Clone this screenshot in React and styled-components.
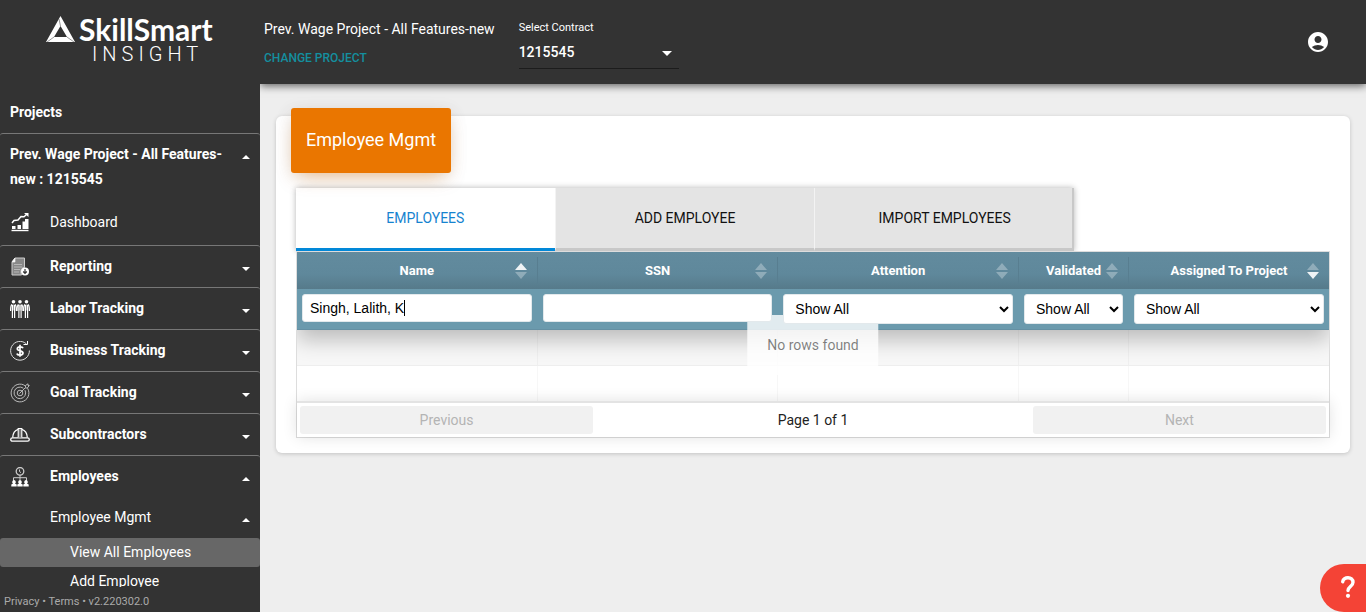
import React from "react";
import styled, { createGlobalStyle, css } from "styled-components";
import { MdAccountCircle } from "react-icons/md";

const GlobalStyle = createGlobalStyle`
  *, *::before, *::after { box-sizing: border-box; }
  body {
    margin: 0;
    background: #eee;
    font-family: Roboto, "Liberation Sans", sans-serif;
    font-size: 14px;
    color: #222;
  }
  button, a { font-family: inherit; }
`;

const Page = styled.div`
  display: grid;
  grid-template-columns: 260px minmax(0, 1fr);
  min-height: 100vh;
`;

const Sidebar = styled.aside`
  display: flex;
  flex-direction: column;
  height: 100vh;
  background: #333;
  color: #fff;
  z-index: 3;
`;

const Logo = styled.a`
  display: flex;
  flex-direction: column;
  height: 92px;
  flex: none;
  padding: 14px 0 0 46px;
  color: #fff;
  text-decoration: none;
`;

const LogoTop = styled.span`
  display: flex;
  align-items: center;
  gap: 4px;
  height: 30px;
  font: 700 30px/30px Lato, sans-serif;
`;

const LogoSub = styled.span`
  padding-left: 46px;
  font-size: 20px;
  font-weight: 300;
  line-height: 20px;
  letter-spacing: 5px;
`;

const Nav = styled.nav`
  flex: 1;
  min-height: 0;
  overflow: hidden;
`;

const rowStyle = css`
  display: flex;
  align-items: center;
  width: 100%;
  padding: 0 10px;
  border: 0;
  background: none;
  color: #fff;
  font-size: 14px;
  text-align: left;
  text-decoration: none;
`;

const Section = styled.div`
  border-top: ${(p) => (p.$first ? "0" : "1px solid #777")};
  border-radius: 3px;
`;

const Caret = styled.span`
  width: 0;
  height: 0;
  margin-top: 5px;
  border: 4px solid transparent;
  ${(p) =>
    p.$up
      ? "border-bottom-color: #fff; border-top-width: 0;"
      : "border-top-color: #fff; border-bottom-width: 0;"}
`;

const NavButton = styled.button`
  ${rowStyle}
  height: 41px;
  padding-left: ${(p) => (p.$nested ? "50px" : "10px")};
  gap: 20px;
  font-weight: ${(p) => (p.$nested ? 400 : 700)};
  line-height: 25px;
  ${(p) =>
    p.$tall &&
    css`
      align-items: flex-start;
      height: 66px;
      padding-top: 8px;
      ${Caret} { margin-top: 13px; }
    `}
`;

const NavLabel = styled.span`
  flex: 1;
`;

const NavLink = styled.a`
  ${rowStyle}
  height: 45px;
  padding-bottom: 2px;
  gap: 20px;
`;

const SubLink = styled.a`
  ${rowStyle}
  height: 29px;
  padding-left: 70px;
  padding-bottom: 2px;
  border-radius: 3px;
  background: ${(p) => (p.$active ? "#676767" : "transparent")};
`;

const Legal = styled.footer`
  height: 25px;
  flex: none;
  padding: 1px 4px 0;
  font-size: 11px;
  line-height: 28px;
  color: #aaa;
  a { color: inherit; text-decoration: none; }
`;

const TopBar = styled.header`
  position: relative;
  z-index: 2;
  display: flex;
  align-items: flex-start;
  gap: 24px;
  height: 84px;
  padding: 0 36px 0 4px;
  background: #333;
  color: #fff;
  box-shadow: 0 2px 8px rgba(0, 0, 0, 0.6);
`;

const Project = styled.div`
  display: flex;
  flex-direction: column;
  align-items: flex-start;
  gap: 10px;
  min-width: 230px;
  padding-top: 20px;
  font-size: 14px;
  line-height: 18px;
`;

const ChangeLink = styled.button`
  padding: 0;
  border: 0;
  background: none;
  color: #148f9f;
  font-size: 12px;
  font-weight: 500;
  line-height: 20px;
  text-transform: uppercase;
`;

const Contract = styled.label`
  position: relative;
  display: flex;
  flex-direction: column;
  width: 160px;
  padding-top: 20px;
  font-size: 11px;
  line-height: 15px;
  svg { position: absolute; right: 7px; bottom: 13px; pointer-events: none; }
`;

const ContractSelect = styled.select`
  appearance: none;
  width: 100%;
  height: 34px;
  padding: 0;
  border: 0;
  border-bottom: 1px solid #1c1c1c;
  background: #333;
  color: #fff;
  font: 500 14px Roboto, sans-serif;
`;

const Account = styled.button`
  align-self: center;
  display: flex;
  margin-left: auto;
  padding: 0;
  border: 0;
  background: none;
  color: #fff;
`;

const Content = styled.main`
  padding: 32px 16px;
`;

const Card = styled.section`
  padding: 0 20px 15px;
  border-radius: 6px;
  background: #fff;
  box-shadow: 0 1px 4px rgba(0, 0, 0, 0.18);
`;

const Title = styled.h1`
  position: relative;
  top: -8px;
  width: fit-content;
  margin: 0 0 7px -5px;
  padding: 19px 15px 21px;
  border-radius: 3px;
  background: #ea7600;
  box-shadow: 0 8px 20px -8px rgba(234, 118, 0, 0.5), 0 4px 18px rgba(0, 0, 0, 0.1);
  color: #fff;
  font-size: 18px;
  font-weight: 400;
  line-height: 25px;
`;

const Tabs = styled.div`
  display: flex;
  width: 778px;
  max-width: 100%;
  box-shadow: 0 0 6px rgba(0, 0, 0, 0.3);
`;

const Tab = styled.button`
  flex: 1;
  height: 63px;
  padding: 0;
  border: 0;
  border-left: ${(p) => (p.$active ? "0" : "1px solid #f3f3f3")};
  border-bottom: 3px solid ${(p) => (p.$active ? "#0288d8" : "#c8c8c8")};
  background: ${(p) => (p.$active ? "#fff" : "#e4e4e4")};
  box-shadow: ${(p) => (p.$last ? "inset -2px 0 #c8c8c8" : "none")};
  color: ${(p) => (p.$active ? "#1683cf" : "#111")};
  font-size: 14px;
  text-transform: uppercase;
`;

const Grid = styled.div`
  position: relative;
  border: 1px solid #ddd;
`;

const TableClip = styled.div`
  overflow: hidden;
`;

const Table = styled.table`
  width: 100%;
  table-layout: fixed;
  border-collapse: separate;
  border-spacing: 0;
  thead {
    position: relative;
    box-shadow: 0 10px 20px rgba(0, 0, 0, 0.24);
  }
`;

const Column = styled.col`
  width: ${(p) => p.$width};
`;

const HeadCell = styled.th`
  height: 37px;
  padding: 5px 0;
  background: linear-gradient(#628b9e, #5f889b 60%, #567a8a);
`;

const SortButton = styled.button`
  display: grid;
  grid-template-columns: 1fr auto 1fr;
  align-items: center;
  width: 100%;
  height: 27px;
  padding: 0 10px;
  border: 0;
  border-right: ${(p) => (p.$last ? "0" : "1px solid #587e90")};
  background: none;
  color: #fff;
  font-size: 13px;
  font-weight: 700;
  span { grid-column: 2; }
  svg { justify-self: end; }
`;

const FilterCell = styled.th`
  position: relative;
  height: 41px;
  padding: 5px 6px 0 5px;
  border-bottom: 1px solid #6590a3;
  background: #6b9aad;
  vertical-align: top;
  text-align: left;
  font-weight: 400;
  line-height: 0;
  &:last-child { padding-right: 5px; }
`;

const field = css`
  position: relative;
  z-index: 2;
  width: 100%;
  border: 1px solid #e3e9ec;
  border-radius: 3px;
  background: #fff;
  color: #000;
  font: 14px "Liberation Sans", Arial, sans-serif;
  outline: none;
`;

const TextFilter = styled.input`
  ${field}
  height: 28px;
  padding: 0 7px;
`;

const SelectFilter = styled.select`
  ${field}
  height: 30px;
  padding: 0 0 0 7px;
`;

const Cursor = styled.span`
  position: absolute;
  z-index: 3;
  top: 11px;
  left: 107px;
  width: 1px;
  height: 16px;
  background: #000;
`;

const BodyCell = styled.td`
  height: ${(p) => (p.$odd ? "36px" : "35px")};
  padding: 0;
  border-right: ${(p) => (p.$last ? "0" : "1px solid rgba(0, 0, 0, 0.03)")};
  border-bottom: ${(p) => (p.$odd ? "1px solid #eee" : "0")};
  background: ${(p) => (p.$odd ? "#f7f7f7" : "#fff")};
`;

const NoRows = styled.div`
  position: absolute;
  z-index: 1;
  top: 50%;
  left: 50%;
  transform: translate(-50%, -50%);
  padding: 20px;
  background: rgba(255, 255, 255, 0.8);
  color: rgba(0, 0, 0, 0.5);
  line-height: 20px;
`;

const Pagination = styled.div`
  position: relative;
  display: grid;
  grid-template-columns: 1fr 1.5fr 1fr;
  align-items: center;
  height: 36px;
  padding: 0 3px;
  border-top: 2px solid #e3e3e3;
  background: #fff;
  box-shadow: 0 0 15px rgba(0, 0, 0, 0.12);
  text-align: center;
`;

const PageButton = styled.button`
  height: 28px;
  border: 0;
  border-radius: 3px;
  background: #f1f1f1;
  color: #b4b4b4;
  font-size: 14px;
`;

const Help = styled.button`
  position: fixed;
  z-index: 5;
  right: 0;
  bottom: 0;
  width: 46px;
  height: 48px;
  padding: 0 0 0 10px;
  border: 0;
  border-radius: 24px 0 0 24px;
  background: #f44336;
`;

const Glyph = ({ children }) => (
  <svg width="20" height="20" viewBox="0 0 20 20" fill="none" stroke="#fff" strokeWidth="1" aria-hidden="true">
    {children}
  </svg>
);

const icons = {
  dashboard: (
    <Glyph>
      <path d="M1.5 18.500h17" strokeWidth="1.400" />
      <path d="M2 14h3.500v3H2zM7.500 13H11v4H7.500zM12.500 9.500H16V17h-3.500z" fill="#fff" stroke="none" />
      <path d="M15 7h3.500v10H15z" fill="#fff" stroke="none" />
      <path d="M2 11l2-2.500 4-.5 3-3.500 3 .2L17 2" strokeWidth="1.500" />
      <path d="M14 1h4.500v4z" fill="#fff" stroke="none" />
    </Glyph>
  ),
  reporting: (
    <Glyph>
      <path d="M5 1h9.500v9.500c-3 0-4.500 3-3 7.500H2V5z" fill="#888" stroke="#ccc" />
      <path d="M2 5h3V1z" fill="#fff" stroke="#eee" strokeWidth=".7" />
      <path d="M4 7.500h8M4 10h8M4 12.500h6M4 15h5" stroke="#ccc" strokeWidth=".7" />
      <circle cx="15" cy="14.500" r="4" fill="#fff" stroke="none" />
      <path d="M15 12v4M13.200 14.500l1.800 1.800 1.800-1.800" stroke="#333" strokeWidth="1.200" />
    </Glyph>
  ),
  labor: (
    <Glyph>
      {[3.5, 10, 16.5].map((x) => (
        <g key={x} transform={`translate(${x} 0)`}>
          <circle cx="0" cy="2.700" r="1.800" fill="#fff" stroke="none" />
          <path d="M-1.600 5.500h3.200v6h-3.200z" fill="#999" stroke="none" />
          <path d="M-1.500 5.500C-3 6-2.900 8-2.900 12M1.500 5.500C3 6 2.900 8 2.900 12M-1.100 6v13M1.100 6v13" strokeWidth="1.200" />
        </g>
      ))}
    </Glyph>
  ),
  business: (
    <Glyph>
      <path d="M16.500 3A9.400 9.400 0 1 0 19.400 9.500" stroke="#ddd" />
      <path d="M13.500 3.500h4V0" />
      <path d="M13 7.200C12.500 5.600 7.500 5.200 7.300 7.800c0 2.600 5.700 1.600 5.700 4.300 0 2.700-5.500 2.500-6 .4M10 3.800v12" strokeWidth="1.700" />
    </Glyph>
  ),
  goal: (
    <Glyph>
      <g stroke="#bbb">
        <path d="M15.500 3A8.900 8.900 0 1 0 17.500 5.200" />
        <path d="M13.300 5.200A5.800 5.800 0 1 0 15 7.200" />
        <circle cx="10" cy="10" r="2.800" />
        <path d="M9.500 10.500l6-6V2.500L18 .8v1.700h1.300L17.300 5h-2" />
      </g>
    </Glyph>
  ),
  subcontractors: (
    <Glyph>
      <rect x=".7" y="12.800" width="18.600" height="3.400" rx="1.700" strokeWidth="1.300" />
      <path d="M2.700 12.500C2.900 8 5 5.200 8.200 4.300M17.300 12.500c-.2-4.500-2.300-7.300-5.500-8.200" strokeWidth="1.300" />
      <path d="M8.200 12.500V3.500h3.600v9" fill="#777" strokeWidth="1.100" />
    </Glyph>
  ),
  employees: (
    <Glyph>
      <g stroke="#ccc">
        <circle cx="10" cy="4.300" r="3.800" strokeWidth="1.300" />
        <path d="M9.500 2.500v2l1.500 1.200M10 8v5M3.500 14v-3.300h13V14" />
      </g>
      {[4, 10, 16].map((x) => (
        <path key={x} d={`M${x - 2.7} 19.500v-2l1.700-1a1.800 1.800 0 1 1 2 0l1.700 1v2z`} fill="#fff" stroke="none" />
      ))}
    </Glyph>
  ),
};

const SortArrows = ({ direction }) => (
  <svg width="12" height="16" viewBox="0 0 12 16" fill="#fff" aria-hidden="true">
    <path d="M6 0l6 7H0z" opacity={direction === "asc" ? 0.9 : 0.3} />
    <path d="M6 16l6-7H0z" opacity={direction === "desc" ? 0.9 : 0.3} />
  </svg>
);

const sections = [
  ["reporting", "Reporting"],
  ["labor", "Labor Tracking"],
  ["business", "Business Tracking"],
  ["goal", "Goal Tracking"],
  ["subcontractors", "Subcontractors"],
];

const columns = [
  { name: "Name", width: "auto", sort: "asc", filter: "text", value: "Singh, Lalith, K" },
  { name: "SSN", width: "auto", filter: "text", value: "" },
  { name: "Attention", width: "auto", filter: "select" },
  { name: "Validated", width: "110px", filter: "select" },
  { name: "Assigned To Project", width: "200px", sort: "desc", filter: "select" },
];

export default function App() {
  const last = columns.length - 1;
  return (
    <>
      <GlobalStyle />
      <Page>
        <Sidebar>
          <Logo href="#">
            <LogoTop>
              <svg width="29" height="26" viewBox="0 0 29 26" aria-hidden="true">
                <path d="M14.500 0L29 26H0zM14.500 10L8 21h13z" fill="#fff" fillRule="evenodd" />
                <path d="M14.500 10L13 3M8 21l-7 5M21 21l7 5" stroke="#555" strokeWidth=".6" />
              </svg>
              SkillSmart
            </LogoTop>
            <LogoSub>INSIGHT</LogoSub>
          </Logo>
          <Nav>
            <Section $first>
              <NavButton>Projects</NavButton>
            </Section>
            <Section>
              <NavButton $tall>
                <NavLabel>Prev. Wage Project - All Features-new : 1215545</NavLabel>
                <Caret $up />
              </NavButton>
              <NavLink href="#">{icons.dashboard}Dashboard</NavLink>
            </Section>
            {sections.map(([icon, label]) => (
              <Section key={icon}>
                <NavButton>
                  {icons[icon]}
                  <NavLabel>{label}</NavLabel>
                  <Caret />
                </NavButton>
              </Section>
            ))}
            <Section>
              <NavButton>
                {icons.employees}
                <NavLabel>Employees</NavLabel>
                <Caret $up />
              </NavButton>
              <NavButton $nested>
                <NavLabel>Employee Mgmt</NavLabel>
                <Caret $up />
              </NavButton>
              <SubLink href="#" $active>View All Employees</SubLink>
              <SubLink href="#">Add Employee</SubLink>
            </Section>
          </Nav>
          <Legal>
            <a href="#">Privacy</a> • <a href="#">Terms</a> • v2.220302.0
          </Legal>
        </Sidebar>
        <div>
          <TopBar>
            <Project>
              Prev. Wage Project - All Features-new
              <ChangeLink>Change Project</ChangeLink>
            </Project>
            <Contract>
              Select Contract
              <ContractSelect defaultValue="1215545">
                <option>1215545</option>
              </ContractSelect>
              <svg width="10" height="5" viewBox="0 0 10 5" fill="#fff" aria-hidden="true">
                <path d="M0 0h10L5 5z" />
              </svg>
            </Contract>
            <Account aria-label="Account">
              <MdAccountCircle size={24} />
            </Account>
          </TopBar>
          <Content>
            <Card>
              <Title>Employee Mgmt</Title>
              <Tabs role="tablist">
                <Tab role="tab" aria-selected="true" $active>Employees</Tab>
                <Tab role="tab">Add Employee</Tab>
                <Tab role="tab" $last>Import Employees</Tab>
              </Tabs>
              <Grid>
                <TableClip>
                  <Table>
                    <colgroup>
                      {columns.map((c) => (
                        <Column key={c.name} $width={c.width} />
                      ))}
                    </colgroup>
                    <thead>
                      <tr>
                        {columns.map((c, i) => (
                          <HeadCell key={c.name} scope="col">
                            <SortButton $last={i === last}>
                              <span>{c.name}</span>
                              <SortArrows direction={c.sort} />
                            </SortButton>
                          </HeadCell>
                        ))}
                      </tr>
                      <tr>
                        {columns.map((c) => (
                          <FilterCell key={c.name}>
                            {c.filter === "text" ? (
                              <TextFilter aria-label={`Filter ${c.name}`} defaultValue={c.value} />
                            ) : (
                              <SelectFilter aria-label={`Filter ${c.name}`}>
                                <option>Show All</option>
                              </SelectFilter>
                            )}
                            {c.value && <Cursor />}
                          </FilterCell>
                        ))}
                      </tr>
                    </thead>
                    <tbody>
                      {[true, false].map((odd) => (
                        <tr key={String(odd)}>
                          {columns.map((c, i) => (
                            <BodyCell key={c.name} $odd={odd} $last={i === last} />
                          ))}
                        </tr>
                      ))}
                    </tbody>
                  </Table>
                </TableClip>
                <NoRows>No rows found</NoRows>
                <Pagination>
                  <PageButton disabled>Previous</PageButton>
                  <span>Page 1 of 1</span>
                  <PageButton disabled>Next</PageButton>
                </Pagination>
              </Grid>
            </Card>
          </Content>
        </div>
      </Page>
      <Help aria-label="Help">
        <svg width="16" height="24" viewBox="0 0 16 24" fill="none" stroke="#fff" strokeWidth="3.400" strokeLinecap="round" aria-hidden="true">
          <path d="M2.700 6.800C3.300 1.300 13 1.300 13 7.300c0 4-5 4.500-5 8.200" />
          <circle cx="8" cy="20.800" r="2.100" fill="#fff" stroke="none" />
        </svg>
      </Help>
    </>
  );
}
